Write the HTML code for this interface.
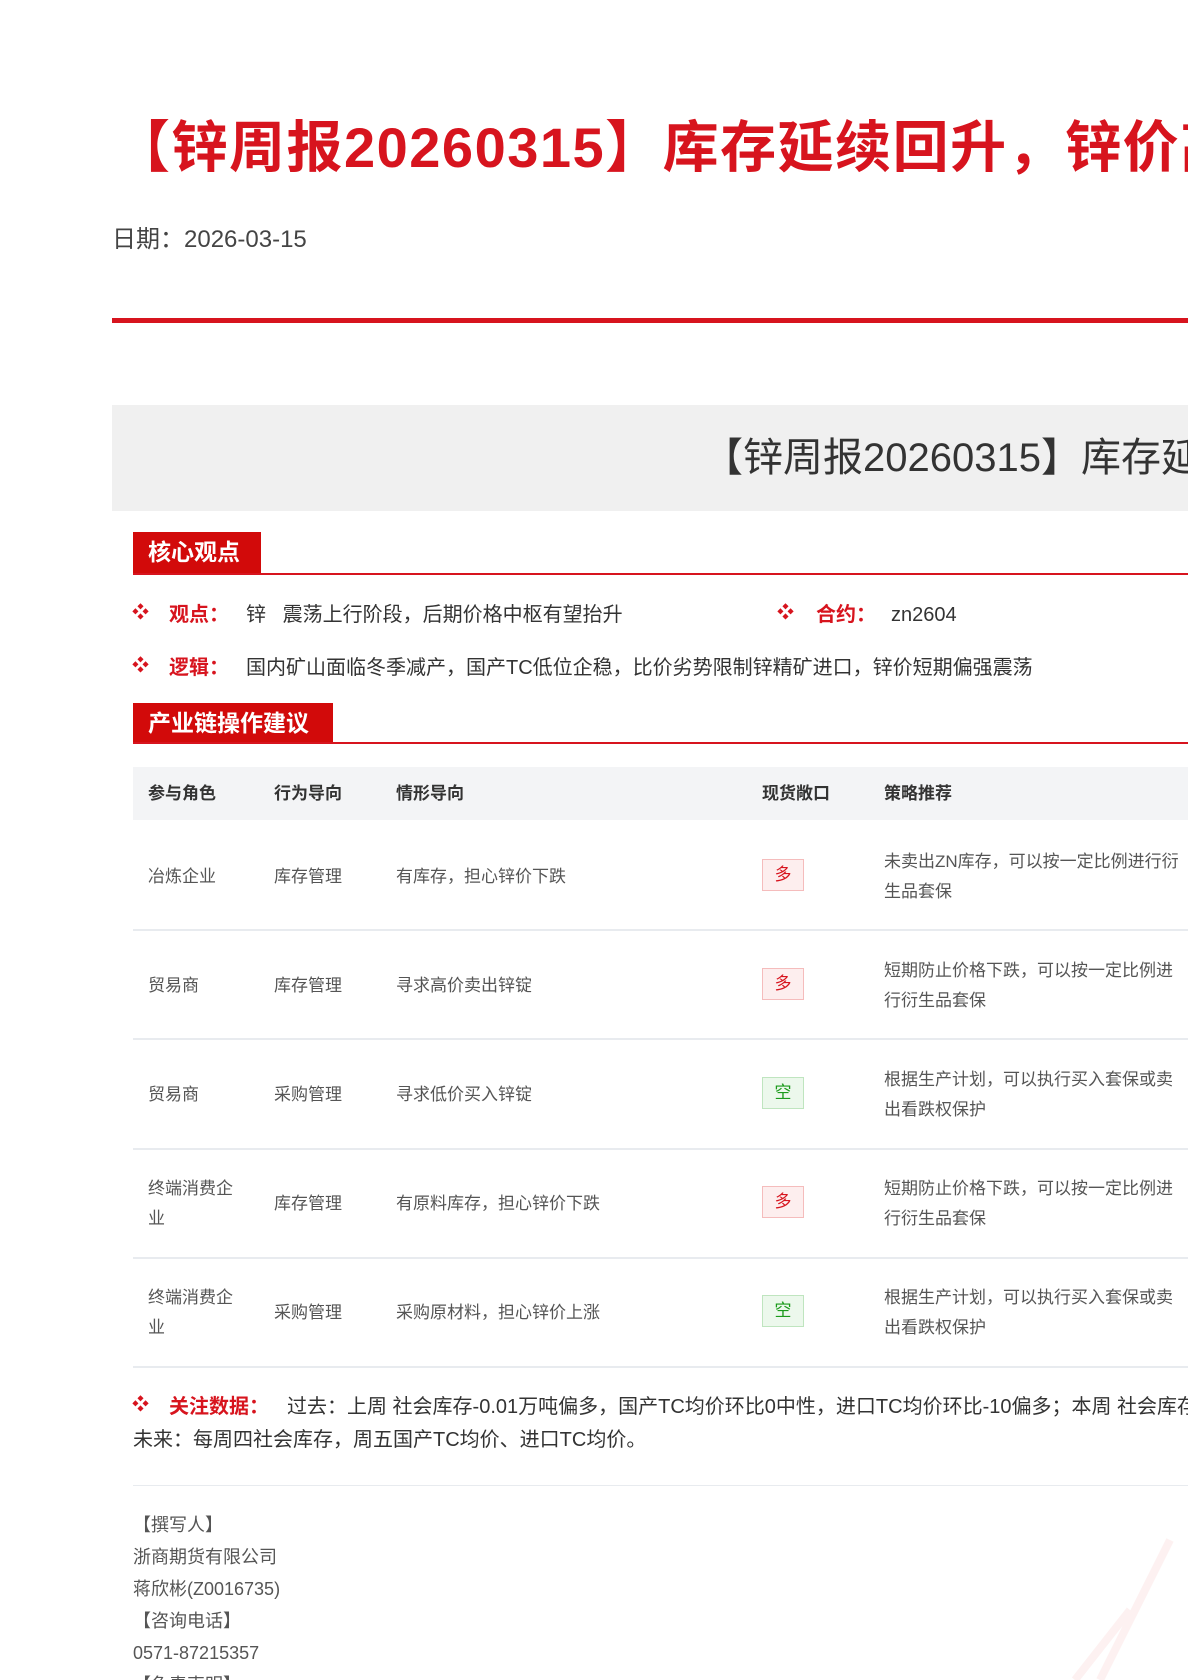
<!DOCTYPE html>
<html><head><meta charset="utf-8"><style>
*{margin:0;padding:0;box-sizing:border-box}
html,body{width:1188px;height:1680px;overflow:hidden;background:#fff}
body{position:relative;font-family:"Liberation Sans","Noto Sans CJK SC",sans-serif;color:#333}
.a{position:absolute;white-space:nowrap}
.title{left:114px;top:112px;font-size:56px;font-weight:bold;color:#d7141e;line-height:72px;letter-spacing:1.5px}
.date{left:112px;top:226px;font-size:24px;color:#444;line-height:28px}
.bar{left:112px;top:318px;width:1076px;height:5px;background:#d7141e}
.gray{left:112px;top:405px;width:1076px;height:106px;background:#f0f0f0}
.gt{left:703px;top:434px;font-size:40px;color:#333;line-height:48px}
.hd{background:#d20a0a;color:#fff;font-size:23px;font-weight:bold;line-height:41px;padding-left:15px}
.ln{left:133px;width:1055px;height:2px;background:#d7141e}
.bl{color:#d7141e;font-size:17px;line-height:24px}
.lb{color:#d7141e;font-weight:bold;font-size:20px;line-height:24px}
.tx{font-size:20px;color:#333;line-height:24px}
.th{left:133px;top:767px;width:1055px;height:53px;background:#f3f4f6}
.hc{top:783px;font-size:17px;font-weight:bold;color:#333;line-height:22px}
.c{font-size:17px;color:#555;line-height:30px}
.rl{left:133px;width:1055px;height:2px;background:#e8ebef}
.bd{width:42px;height:32px;line-height:30px;text-align:center;font-size:17px;border:1px solid}
.d{color:#d7141e;background:#fdeeee;border-color:#f5bcbc}
.k{color:#1a9a1a;background:#ecf8ec;border-color:#bfe5bf}
.f{left:133px;font-size:18px;color:#555;line-height:32px}
</style></head><body>
<div class="a title">【锌周报20260315】库存延续回升，锌价高位震荡</div>
<div class="a date">日期：2026-03-15</div>
<div class="a bar"></div>
<div class="a gray"></div>
<div class="a gt">【锌周报20260315】库存延续回升，锌价高位震荡</div>

<div class="a hd" style="left:133px;top:532px;width:128px">核心观点</div>
<div class="a ln" style="top:573px"></div>
<div class="a bl" style="left:132px;top:601px">❖</div>
<div class="a lb" style="left:169px;top:603px">观点：</div>
<div class="a tx" style="left:246px;top:603px">锌&nbsp;&nbsp;&nbsp;震荡上行阶段，后期价格中枢有望抬升</div>
<div class="a bl" style="left:777px;top:601px">❖</div>
<div class="a lb" style="left:816px;top:603px">合约：</div>
<div class="a tx" style="left:891px;top:603px">zn2604</div>
<div class="a bl" style="left:132px;top:654px">❖</div>
<div class="a lb" style="left:169px;top:656px">逻辑：</div>
<div class="a tx" style="left:246px;top:656px">国内矿山面临冬季减产，国产TC低位企稳，比价劣势限制锌精矿进口，锌价短期偏强震荡</div>

<div class="a hd" style="left:133px;top:703px;width:200px">产业链操作建议</div>
<div class="a ln" style="top:742px"></div>

<div class="a th"></div>
<div class="a hc" style="left:148px">参与角色</div>
<div class="a hc" style="left:274px">行为导向</div>
<div class="a hc" style="left:396px">情形导向</div>
<div class="a hc" style="left:762px">现货敞口</div>
<div class="a hc" style="left:884px">策略推荐</div>

<div class="a c" style="left:148px;top:862px">冶炼企业</div>
<div class="a c" style="left:274px;top:862px">库存管理</div>
<div class="a c" style="left:396px;top:862px">有库存，担心锌价下跌</div>
<div class="a bd d" style="left:762px;top:859px">多</div>
<div class="a c" style="left:884px;top:847px">未卖出ZN库存，可以按一定比例进行衍<br>生品套保</div>
<div class="a rl" style="top:929px"></div>

<div class="a c" style="left:148px;top:971px">贸易商</div>
<div class="a c" style="left:274px;top:971px">库存管理</div>
<div class="a c" style="left:396px;top:971px">寻求高价卖出锌锭</div>
<div class="a bd d" style="left:762px;top:968px">多</div>
<div class="a c" style="left:884px;top:956px">短期防止价格下跌，可以按一定比例进<br>行衍生品套保</div>
<div class="a rl" style="top:1038px"></div>

<div class="a c" style="left:148px;top:1080px">贸易商</div>
<div class="a c" style="left:274px;top:1080px">采购管理</div>
<div class="a c" style="left:396px;top:1080px">寻求低价买入锌锭</div>
<div class="a bd k" style="left:762px;top:1077px">空</div>
<div class="a c" style="left:884px;top:1065px">根据生产计划，可以执行买入套保或卖<br>出看跌权保护</div>
<div class="a rl" style="top:1148px"></div>

<div class="a c" style="left:148px;top:1174px">终端消费企<br>业</div>
<div class="a c" style="left:274px;top:1189px">库存管理</div>
<div class="a c" style="left:396px;top:1189px">有原料库存，担心锌价下跌</div>
<div class="a bd d" style="left:762px;top:1186px">多</div>
<div class="a c" style="left:884px;top:1174px">短期防止价格下跌，可以按一定比例进<br>行衍生品套保</div>
<div class="a rl" style="top:1257px"></div>

<div class="a c" style="left:148px;top:1283px">终端消费企<br>业</div>
<div class="a c" style="left:274px;top:1298px">采购管理</div>
<div class="a c" style="left:396px;top:1298px">采购原材料，担心锌价上涨</div>
<div class="a bd k" style="left:762px;top:1295px">空</div>
<div class="a c" style="left:884px;top:1283px">根据生产计划，可以执行买入套保或卖<br>出看跌权保护</div>
<div class="a rl" style="top:1366px"></div>

<div class="a bl" style="left:132px;top:1393px">❖</div>
<div class="a lb" style="left:169px;top:1395px">关注数据：</div>
<div class="a tx" style="left:287px;top:1395px">过去：上周 社会库存-0.01万吨偏多，国产TC均价环比0中性，进口TC均价环比-10偏多；本周 社会库存</div>
<div class="a tx" style="left:133px;top:1428px">未来：每周四社会库存，周五国产TC均价、进口TC均价。</div>
<div class="a rl" style="top:1485px;height:1px"></div>

<div class="a f" style="top:1509px">【撰写人】</div>
<div class="a f" style="top:1541px">浙商期货有限公司</div>
<div class="a f" style="top:1573px">蒋欣彬(Z0016735)</div>
<div class="a f" style="top:1605px">【咨询电话】</div>
<div class="a f" style="top:1637px">0571-87215357</div>
<div class="a f" style="top:1669px">【免责声明】</div>
<svg class="a" style="left:980px;top:1520px" width="208" height="160"><path d="M190 20 L120 160 M150 90 L95 160" stroke="#fdf1f1" stroke-width="8" fill="none"/></svg>
</body></html>
